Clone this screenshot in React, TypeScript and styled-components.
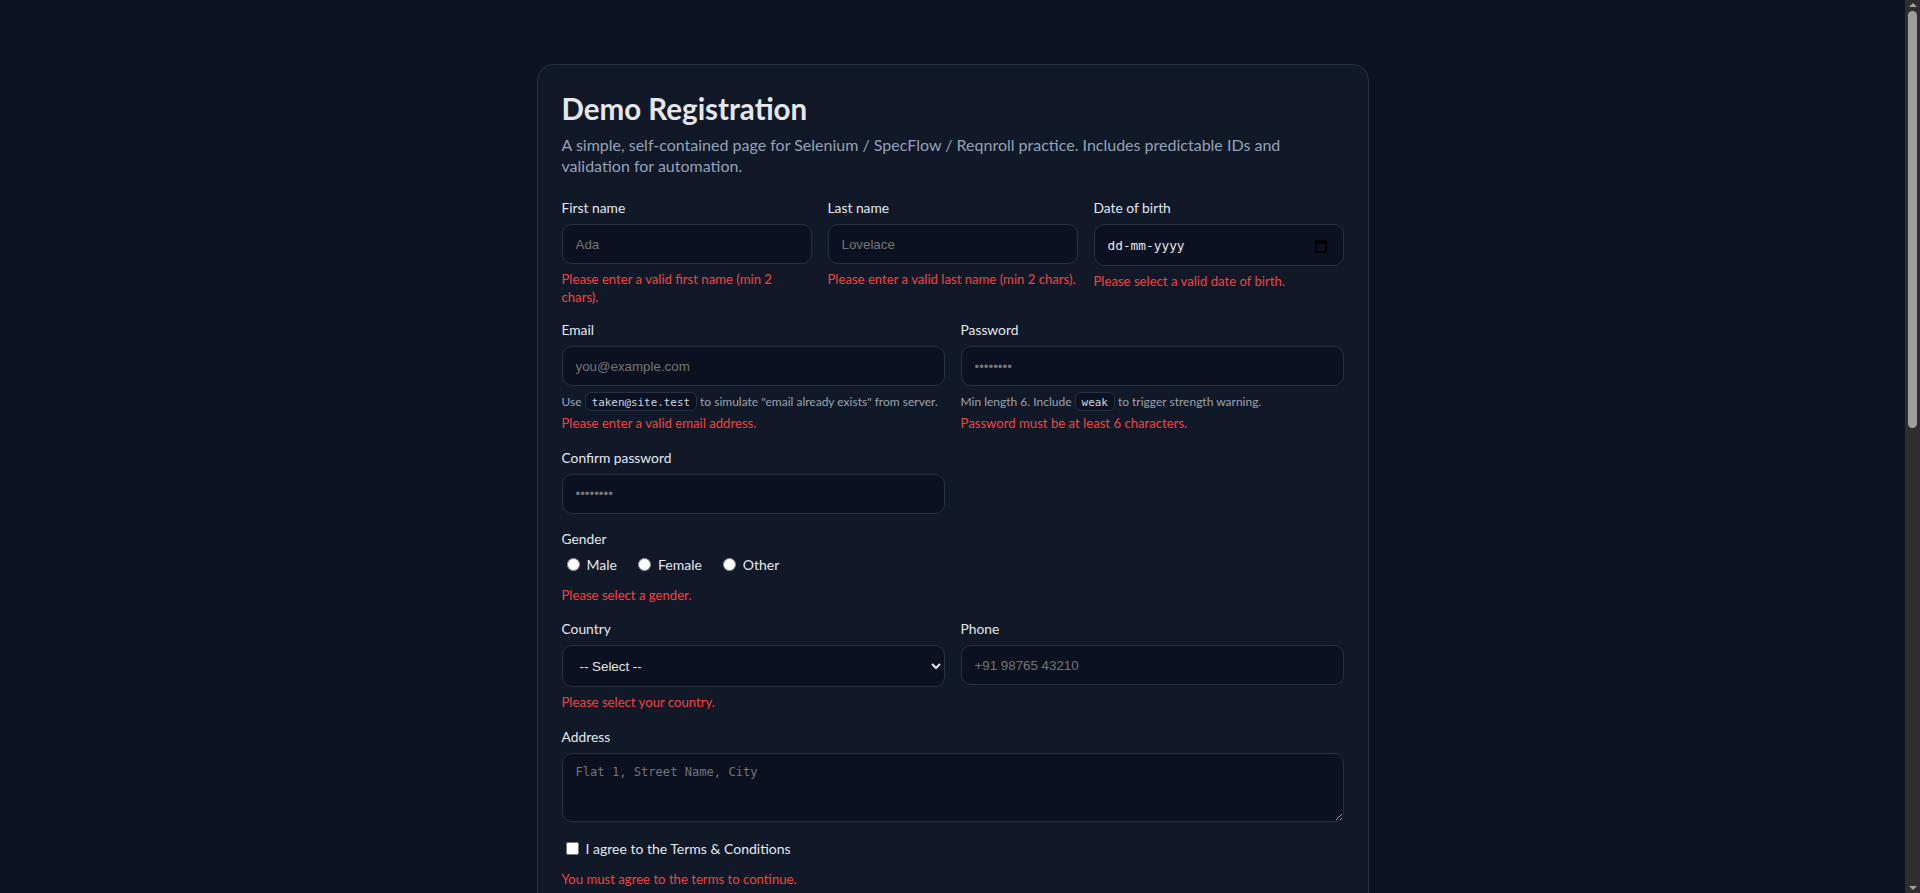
import React from "react";
import styled, { createGlobalStyle } from "styled-components";

const FONT = `Lato, "Open Sans", Arial, sans-serif`;

const GlobalStyle = createGlobalStyle`
  * { box-sizing: border-box; }
  body {
    margin: 0;
    background: #0c1222;
    color: #e5e7eb;
    font-family: ${FONT};
  }
`;

const Page = styled.main`
  padding: 64px 31px 48px 16px;
`;

const Card = styled.section`
  max-width: 832px;
  margin: 0 auto;
  background: #111827;
  border: 1px solid #263143;
  border-radius: 16px;
  padding: 24px;
`;

const Title = styled.h1`
  margin: 0;
  font-size: 29.5px;
  line-height: 40px;
  font-weight: 700;
  color: #e5e7eb;
`;

const Subtitle = styled.p`
  margin: 5px 0 22px;
  font-size: 16px;
  line-height: 21px;
  color: #94a3b8;
`;

const Grid = styled.div<{ $cols: number; $bottom?: number }>`
  display: grid;
  grid-template-columns: repeat(${(p) => p.$cols}, 1fr);
  gap: 16px;
  margin-bottom: ${(p) => p.$bottom ?? 15}px;
`;

const Field = styled.div`
  position: relative;
`;

const Label = styled.label`
  display: block;
  font-size: 13.8px;
  line-height: 20px;
  color: #e2e8f0;
  margin-bottom: 6px;
`;

const controlBase = `
  display: block;
  width: 100%;
  border: 1px solid #263143;
  border-radius: 10px;
  background: #0b1120;
  color: #e5e7eb;
  outline: none;
  &::placeholder { color: #757575; }
`;

const TextInput = styled.input`
  ${controlBase}
  height: 40px;
  padding: 0 13px;
  font: 13.33px "Liberation Sans", Arial, sans-serif;
`;

const DateInput = styled.input`
  ${controlBase}
  height: 42px;
  padding: 0 13px;
  font: 12.8px "DejaVu Sans Mono", monospace;
  &::placeholder { color: #e5e7eb; }
`;

const CalendarIcon = styled.svg`
  position: absolute;
  right: 17px;
  top: 41px;
  width: 12px;
  height: 14px;
  pointer-events: none;
`;

const Select = styled.select`
  ${controlBase}
  height: 42px;
  padding: 0 2px 0 13px;
  font: 13.33px "Liberation Sans", Arial, sans-serif;
`;

const TextArea = styled.textarea`
  ${controlBase}
  height: 69px;
  padding: 11px 13px;
  resize: vertical;
  font: 12.1px "DejaVu Sans Mono", monospace;
`;

const ErrorText = styled.div<{ $top?: number }>`
  color: #ef4444;
  font-size: 13.15px;
  line-height: 17.5px;
  margin-top: ${(p) => p.$top ?? 7}px;
`;

const Hint = styled.div`
  color: #9ca3af;
  font-size: 12px;
  line-height: 20px;
  margin-top: 6px;
  white-space: nowrap;
`;

const Code = styled.code`
  font: 10.9px "DejaVu Sans Mono", monospace;
  padding: 3px 6px 1px;
  border: 1px solid #263143;
  border-radius: 6px;
  background: #0b1120;
  color: #cbd5e1;
`;

const Group = styled.div<{ $bottom?: number }>`
  margin-bottom: ${(p) => p.$bottom ?? 15}px;
`;

const OptionRow = styled.div`
  display: flex;
  align-items: center;
  gap: 16px;
  margin-top: 1px;
  height: 20px;
`;

const Option = styled.label`
  display: inline-flex;
  align-items: center;
  gap: 4px;
  font-size: 14px;
  line-height: 20px;
  color: #e2e8f0;
`;

const Radio = styled.input`
  margin: 0 3px 0 5px;
`;

const Check = styled.input`
  margin: 3px 3px 3px 4px;
`;

const Actions = styled.div`
  display: flex;
  gap: 12px;
  margin-top: 22px;
`;

const Button = styled.button<{ $primary?: boolean }>`
  height: 40px;
  padding: 0 18px;
  border-radius: 10px;
  border: 1px solid ${(p) => (p.$primary ? "#2563eb" : "#263143")};
  background: ${(p) => (p.$primary ? "#2563eb" : "#0b1120")};
  color: #f8fafc;
  font: 700 14px ${FONT};
`;

const Section = styled.div`
  margin-top: 28px;
  padding-top: 20px;
  border-top: 1px solid #263143;
`;

const SectionTitle = styled.h2`
  margin: 0 0 10px;
  font-size: 18px;
  color: #e5e7eb;
`;

const Pre = styled.pre`
  margin: 0;
  min-height: 560px;
  padding: 14px;
  border: 1px solid #263143;
  border-radius: 10px;
  background: #0b1120;
  color: #94a3b8;
  font: 12px "DejaVu Sans Mono", monospace;
`;

const ScrollTrack = styled.div`
  position: fixed;
  top: 0;
  right: 0;
  width: 15px;
  height: 100vh;
  background: #2e2e2e;
  display: flex;
  flex-direction: column;
  align-items: center;
  justify-content: space-between;
  padding: 3px 0;
  z-index: 10;
`;

const ScrollThumb = styled.div`
  position: absolute;
  top: 11px;
  left: 3px;
  width: 9px;
  height: 417px;
  border-radius: 5px;
  background: #9e9e9e;
`;

const Arrow = styled.div<{ $down?: boolean }>`
  width: 0;
  height: 0;
  border-left: 4px solid transparent;
  border-right: 4px solid transparent;
  ${(p) =>
    p.$down
      ? "border-top: 4px solid #a3a3a3;"
      : "border-bottom: 4px solid #a3a3a3;"}
`;

export default function App() {
  return (
    <>
      <GlobalStyle />
      <ScrollTrack aria-hidden>
        <Arrow />
        <ScrollThumb />
        <Arrow $down />
      </ScrollTrack>
      <Page>
        <Card>
          <Title>Demo Registration</Title>
          <Subtitle>
            A simple, self-contained page for Selenium / SpecFlow / Reqnroll practice. Includes predictable IDs and
            validation for automation.
          </Subtitle>

          <Grid $cols={3} $bottom={14}>
            <Field>
              <Label htmlFor="firstName">First name</Label>
              <TextInput id="firstName" placeholder="Ada" />
              <ErrorText>Please enter a valid first name (min 2 chars).</ErrorText>
            </Field>
            <Field>
              <Label htmlFor="lastName">Last name</Label>
              <TextInput id="lastName" placeholder="Lovelace" />
              <ErrorText>Please enter a valid last name (min 2 chars).</ErrorText>
            </Field>
            <Field>
              <Label htmlFor="dob">Date of birth</Label>
              <DateInput id="dob" placeholder="dd-mm-yyyy" />
              <CalendarIcon viewBox="0 0 12 14" aria-hidden>
                <rect x="0.75" y="2.25" width="10.5" height="11" fill="none" stroke="#000" strokeWidth="1.5" />
                <rect x="0.75" y="2.25" width="10.5" height="2.5" fill="#000" />
                <rect x="2.5" y="0.5" width="1.5" height="2.5" fill="#000" />
                <rect x="8" y="0.5" width="1.5" height="2.5" fill="#000" />
              </CalendarIcon>
              <ErrorText>Please select a valid date of birth.</ErrorText>
            </Field>
          </Grid>

          <Grid $cols={2}>
            <Field>
              <Label htmlFor="email">Email</Label>
              <TextInput id="email" type="email" placeholder="you@example.com" />
              <Hint>
                Use <Code>taken@site.test</Code> to simulate "email already exists" from server.
              </Hint>
              <ErrorText $top={3}>Please enter a valid email address.</ErrorText>
            </Field>
            <Field>
              <Label htmlFor="password">Password</Label>
              <TextInput id="password" type="password" placeholder="••••••••" />
              <Hint>
                Min length 6. Include <Code>weak</Code> to trigger strength warning.
              </Hint>
              <ErrorText $top={3}>Password must be at least 6 characters.</ErrorText>
            </Field>
          </Grid>

          <Grid $cols={2}>
            <Field>
              <Label htmlFor="confirmPassword">Confirm password</Label>
              <TextInput id="confirmPassword" type="password" placeholder="••••••••" />
            </Field>
          </Grid>

          <Group>
            <Label as="div">Gender</Label>
            <OptionRow>
              <Option>
                <Radio type="radio" name="gender" id="genderMale" />
                Male
              </Option>
              <Option>
                <Radio type="radio" name="gender" id="genderFemale" />
                Female
              </Option>
              <Option>
                <Radio type="radio" name="gender" id="genderOther" />
                Other
              </Option>
            </OptionRow>
            <ErrorText $top={12}>Please select a gender.</ErrorText>
          </Group>

          <Grid $cols={2}>
            <Field>
              <Label htmlFor="country">Country</Label>
              <Select id="country" defaultValue="">
                <option value="">-- Select --</option>
                <option value="IN">India</option>
                <option value="UK">United Kingdom</option>
                <option value="US">United States</option>
              </Select>
              <ErrorText>Please select your country.</ErrorText>
            </Field>
            <Field>
              <Label htmlFor="phone">Phone</Label>
              <TextInput id="phone" type="tel" placeholder="+91 98765 43210" />
            </Field>
          </Grid>

          <Group $bottom={17}>
            <Label htmlFor="address">Address</Label>
            <TextArea id="address" placeholder="Flat 1, Street Name, City" />
          </Group>

          <Group>
            <OptionRow>
              <Option>
                <Check type="checkbox" id="terms" />
                I agree to the Terms &amp; Conditions
              </Option>
            </OptionRow>
            <ErrorText $top={12}>You must agree to the terms to continue.</ErrorText>
          </Group>

          <Actions>
            <Button $primary id="submitBtn">Register</Button>
            <Button id="resetBtn">Reset</Button>
          </Actions>

          <Section>
            <SectionTitle>Server response</SectionTitle>
            <Pre id="result">{"// Submit the form to see the payload here."}</Pre>
          </Section>
        </Card>
      </Page>
    </>
  );
}
